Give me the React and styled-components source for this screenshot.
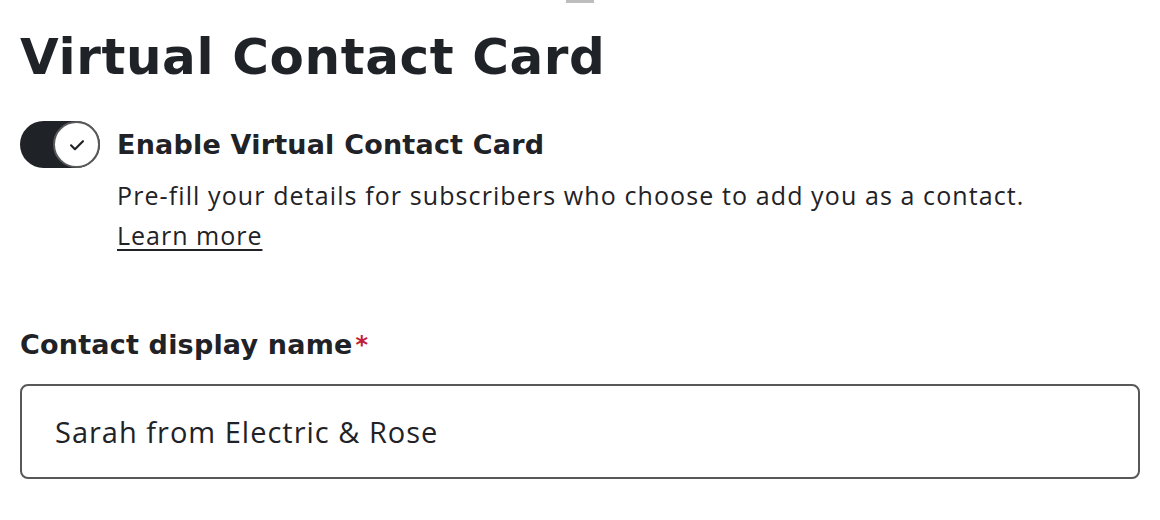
import styled, { createGlobalStyle } from "styled-components";

const GlobalStyle = createGlobalStyle`
	body {
		margin: 0;
		background: #ffffff;
		color: #1f2226;
		font-family: "Open Sans", "Liberation Sans", sans-serif;
	}
`;

export default function App() {
	return (
		<>
			<GlobalStyle />
			<Page>
				<Handle />
				<Title>Virtual Contact Card</Title>
				<ToggleRow>
					<Switch role="switch" aria-checked="true">
						<Knob>
							<svg width="26" height="26" viewBox="0 0 24 24" fill="none">
								<path
									d="M6.5 12.3l3.6 3.6L17.5 8.5"
									stroke="#1f2226"
									strokeWidth="2"
									strokeLinecap="round"
									strokeLinejoin="round"
								/>
							</svg>
						</Knob>
					</Switch>
					<ToggleText>
						<ToggleLabel>Enable Virtual Contact Card</ToggleLabel>
						<Description>
							Pre-fill your details for subscribers who choose to add you as a contact.
						</Description>
						<LearnMore href="#">Learn more</LearnMore>
					</ToggleText>
				</ToggleRow>
				<Field>
					<FieldLabel>
						Contact display name<Required>*</Required>
					</FieldLabel>
					<Input defaultValue="Sarah from Electric & Rose" />
				</Field>
			</Page>
		</>
	);
}

const Page = styled.div`
	padding: 0 20px;
	display: flex;
	flex-direction: column;
`;

const Handle = styled.div`
	align-self: center;
	width: 28px;
	height: 3px;
	background: #bdbdbd;
`;

const Title = styled.h1`
	margin: 25px 0 0;
	font-family: "DejaVu Sans", sans-serif;
	font-weight: 700;
	font-size: 50px;
	line-height: 58px;
	letter-spacing: 0.6px;
`;

const ToggleRow = styled.div`
	display: flex;
	gap: 17px;
	margin-top: 36px;
`;

const Switch = styled.div`
	position: relative;
	flex: none;
	width: 80px;
	height: 47px;
	border-radius: 24px;
	background: #1f2226;
	margin-top: -1px;
`;

const Knob = styled.span`
	position: absolute;
	right: 0;
	top: 0;
	box-sizing: border-box;
	width: 47px;
	height: 47px;
	border-radius: 50%;
	background: #ffffff;
	border: 2px solid #5a5a5a;
	display: flex;
	align-items: center;
	justify-content: center;
`;

const ToggleText = styled.div`
	display: flex;
	flex-direction: column;
	align-items: flex-start;
`;

const ToggleLabel = styled.div`
	font-family: "DejaVu Sans", sans-serif;
	font-weight: 700;
	font-size: 27px;
	line-height: 46px;
	letter-spacing: 0.2px;
`;

const Description = styled.p`
	margin: 7px 0 0;
	font-size: 25px;
	line-height: 40px;
	letter-spacing: 1.1px;
`;

const LearnMore = styled.a`
	font-size: 25px;
	line-height: 40px;
	letter-spacing: 1px;
	color: #1f2226;
	text-decoration: underline;
	text-underline-offset: 4px;
`;

const Field = styled.div`
	display: flex;
	flex-direction: column;
	margin-top: 70px;
`;

const FieldLabel = styled.label`
	font-family: "DejaVu Sans", sans-serif;
	font-weight: 700;
	font-size: 27px;
	line-height: 40px;
	letter-spacing: 0.2px;
`;

const Required = styled.span`
	color: #c01f3c;
	font-size: 24px;
	vertical-align: top;
	margin-left: 3px;
`;

const Input = styled.input`
	margin-top: 19px;
	box-sizing: border-box;
	width: 100%;
	height: 95px;
	padding: 0 33px;
	border: 2px solid #585858;
	border-radius: 8px;
	font-family: "Open Sans", sans-serif;
	font-size: 29px;
	letter-spacing: 1px;
	color: #1f2226;
	outline: none;
`;
